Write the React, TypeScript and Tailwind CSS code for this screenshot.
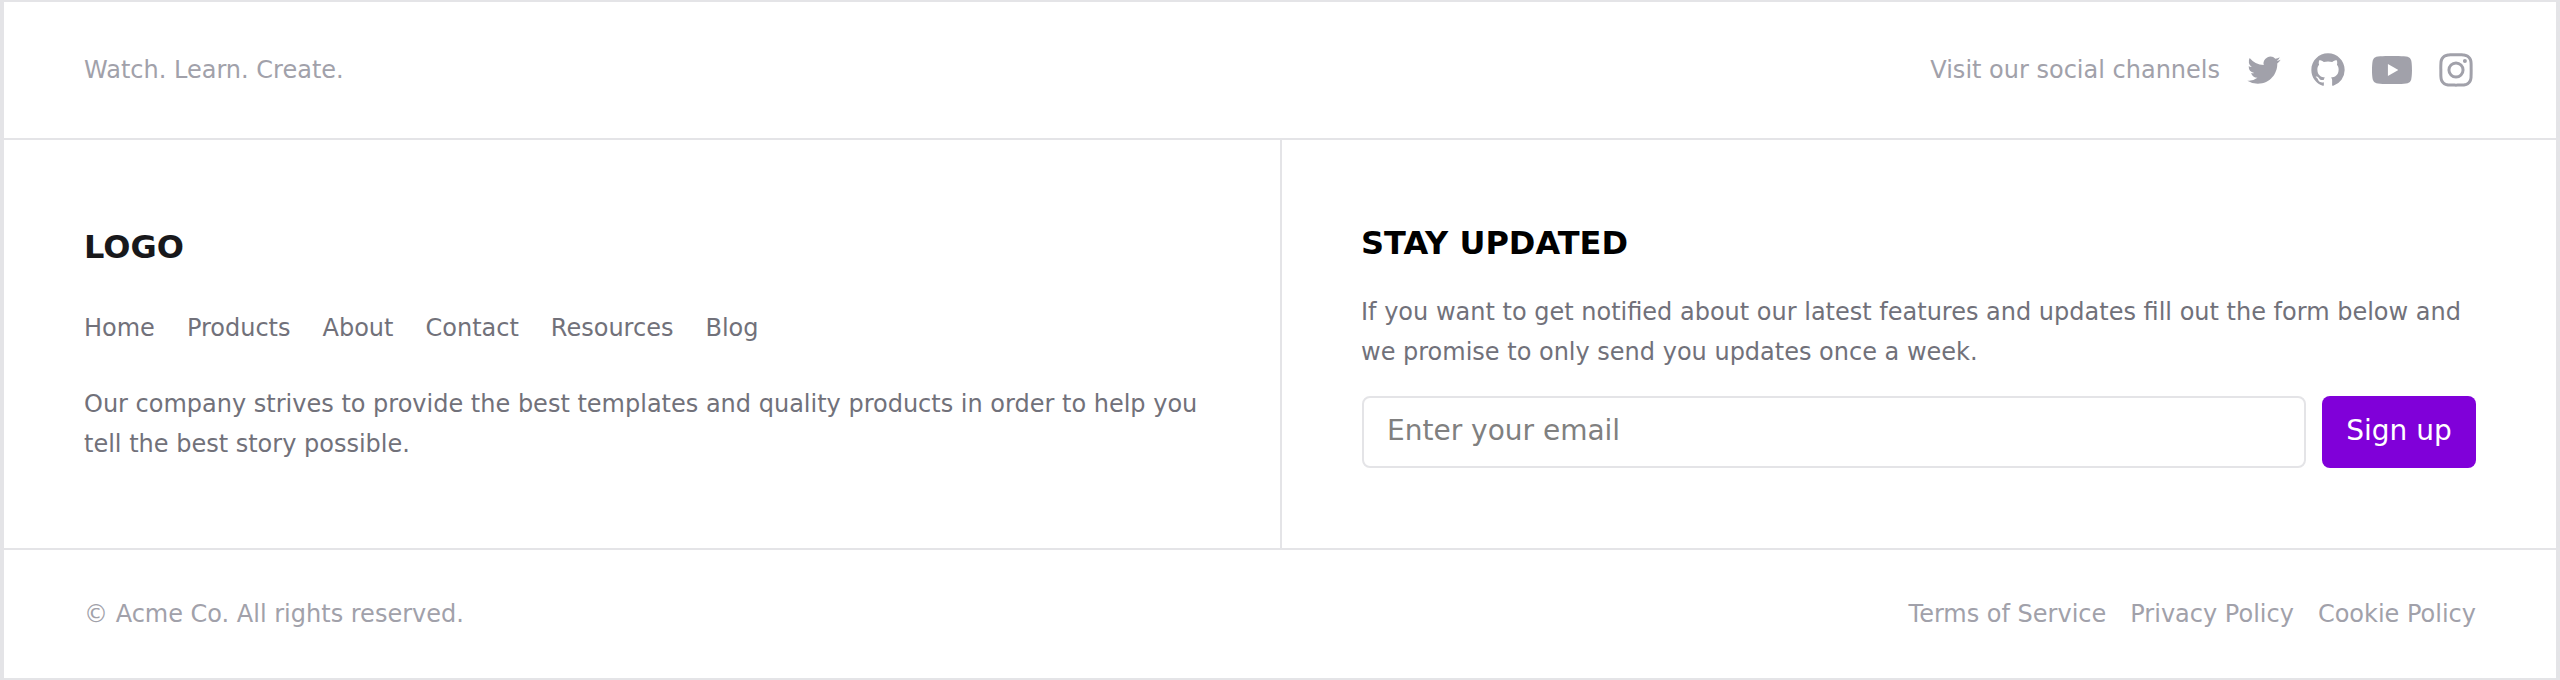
import type { ReactNode } from 'react'

const navLinks = ['Home', 'Products', 'About', 'Contact', 'Resources', 'Blog']
const legalLinks = ['Terms of Service', 'Privacy Policy', 'Cookie Policy']

interface SocialIconProps {
  label: string
  children: ReactNode
}

function SocialIcon({ label, children }: SocialIconProps) {
  return (
    <a href="#" aria-label={label}>
      <svg className="block size-10" viewBox="0 0 24 24" fill="currentColor" fillRule="evenodd" clipRule="evenodd">
        {children}
      </svg>
    </a>
  )
}

export default function App() {
  return (
    <footer className="flex h-[680px] flex-col border-x-4 border-y-2 border-[#e4e4e7] bg-white font-['DejaVu_Sans',sans-serif] text-2xl/10 text-[#71717a]">
      <div className="flex h-[138px] items-center justify-between border-b-2 border-[#e4e4e7] px-20 text-[#a1a1aa]">
        <p>Watch. Learn. Create.</p>
        <div className="flex items-center gap-6">
          <p>Visit our social channels</p>
          <SocialIcon label="Twitter">
            <path d="M8.29 20.251c7.547 0 11.675-6.253 11.675-11.675 0-.178 0-.355-.012-.53A8.348 8.348 0 0022 5.92a8.19 8.19 0 01-2.357.646 4.118 4.118 0 001.804-2.27 8.224 8.224 0 01-2.605.996 4.107 4.107 0 00-6.993 3.743 11.65 11.65 0 01-8.457-4.287 4.106 4.106 0 001.27 5.477A4.072 4.072 0 012.8 9.713v.052a4.105 4.105 0 003.292 4.022 4.095 4.095 0 01-1.853.07 4.108 4.108 0 003.834 2.85A8.233 8.233 0 012 18.407a11.616 11.616 0 006.29 1.84" />
          </SocialIcon>
          <SocialIcon label="GitHub">
            <path d="M12 2C6.477 2 2 6.484 2 12.017c0 4.425 2.865 8.18 6.839 9.504.5.092.682-.217.682-.483 0-.237-.008-.868-.013-1.703-2.782.605-3.369-1.343-3.369-1.343-.454-1.158-1.11-1.466-1.11-1.466-.908-.62.069-.608.069-.608 1.003.07 1.531 1.032 1.531 1.032.892 1.53 2.341 1.088 2.91.832.092-.647.35-1.088.636-1.338-2.22-.253-4.555-1.113-4.555-4.951 0-1.093.39-1.988 1.029-2.688-.103-.253-.446-1.272.098-2.65 0 0 .84-.27 2.75 1.026A9.564 9.564 0 0112 6.844c.85.004 1.705.115 2.504.337 1.909-1.296 2.747-1.027 2.747-1.027.546 1.379.202 2.398.1 2.651.64.7 1.028 1.595 1.028 2.688 0 3.848-2.339 4.695-4.566 4.943.359.309.678.92.678 1.855 0 1.338-.012 2.419-.012 2.747 0 .268.18.58.688.482A10.019 10.019 0 0022 12.017C22 6.484 17.522 2 12 2z" />
          </SocialIcon>
          <SocialIcon label="YouTube">
            <path d="M23.498 6.186a3.016 3.016 0 0 0-2.122-2.136C19.505 3.545 12 3.545 12 3.545s-7.505 0-9.377.505A3.017 3.017 0 0 0 .502 6.186C0 8.07 0 12 0 12s0 3.93.502 5.814a3.016 3.016 0 0 0 2.122 2.136c1.871.505 9.376.505 9.376.505s7.505 0 9.377-.505a3.015 3.015 0 0 0 2.122-2.136C24 15.93 24 12 24 12s0-3.93-.502-5.814zM9.545 15.568V8.432L15.818 12l-6.273 3.568z" />
          </SocialIcon>
          <SocialIcon label="Instagram">
            <path d="M12.315 2c2.43 0 2.784.013 3.808.06 1.064.049 1.791.218 2.427.465a4.902 4.902 0 011.772 1.153 4.902 4.902 0 011.153 1.772c.247.636.416 1.363.465 2.427.048 1.067.06 1.407.06 4.123v.08c0 2.643-.012 2.987-.06 4.043-.049 1.064-.218 1.791-.465 2.427a4.902 4.902 0 01-1.153 1.772 4.902 4.902 0 01-1.772 1.153c-.636.247-1.363.416-2.427.465-1.067.048-1.407.06-4.123.06h-.08c-2.643 0-2.987-.012-4.043-.06-1.064-.049-1.791-.218-2.427-.465a4.902 4.902 0 01-1.772-1.153 4.902 4.902 0 01-1.153-1.772c-.247-.636-.416-1.363-.465-2.427-.047-1.024-.06-1.379-.06-3.808v-.63c0-2.43.013-2.784.06-3.808.049-1.064.218-1.791.465-2.427a4.902 4.902 0 011.153-1.772A4.902 4.902 0 015.45 2.525c.636-.247 1.363-.416 2.427-.465C8.901 2.013 9.256 2 11.685 2h.63zm-.081 1.802h-.468c-2.456 0-2.784.011-3.807.058-.975.045-1.504.207-1.857.344-.467.182-.8.398-1.15.748-.35.35-.566.683-.748 1.15-.137.353-.3.882-.344 1.857-.047 1.023-.058 1.351-.058 3.807v.468c0 2.456.011 2.784.058 3.807.045.975.207 1.504.344 1.857.182.466.399.8.748 1.15.35.35.683.566 1.15.748.353.137.882.3 1.857.344 1.054.048 1.37.058 4.041.058h.08c2.597 0 2.917-.01 3.96-.058.976-.045 1.505-.207 1.858-.344.466-.182.8-.398 1.15-.748.35-.35.566-.683.748-1.15.137-.353.3-.882.344-1.857.048-1.055.058-1.37.058-4.041v-.08c0-2.597-.01-2.917-.058-3.96-.045-.976-.207-1.505-.344-1.858a3.097 3.097 0 00-.748-1.15 3.098 3.098 0 00-1.15-.748c-.353-.137-.882-.3-1.857-.344-1.023-.047-1.351-.058-3.807-.058zM12 6.865a5.135 5.135 0 110 10.27 5.135 5.135 0 010-10.27zm0 1.802a3.333 3.333 0 100 6.666 3.333 3.333 0 000-6.666zm5.338-3.205a1.2 1.2 0 110 2.4 1.2 1.2 0 010-2.4z" />
          </SocialIcon>
        </div>
      </div>

      <div className="flex h-[410px] border-b-2 border-[#e4e4e7]">
        <div className="flex w-[1278px] flex-col justify-center gap-9 border-r-2 border-[#e4e4e7] px-20">
          <h2 className="mb-0.5 text-[32px]/[46px] font-bold text-[#18181b]">LOGO</h2>
          <nav className="flex gap-8">
            {navLinks.map((link) => (
              <a key={link} href="#">{link}</a>
            ))}
          </nav>
          <p>
            Our company strives to provide the best templates and quality products in order to help you tell the best
            story possible.
          </p>
        </div>

        <div className="flex flex-1 flex-col justify-center gap-6 pr-20 pl-[79px]">
          <h2 className="mb-0.5 text-[32px]/[46px] font-bold text-black">STAY UPDATED</h2>
          <p>
            If you want to get notified about our latest features and updates fill out the form below and we promise to
            only send you updates once a week.
          </p>
          <form className="ml-px flex h-18 gap-4 text-[28px]">
            <input
              type="email"
              placeholder="Enter your email"
              className="min-w-0 flex-1 rounded-lg border-2 border-[#e4e4e7] px-[23px] pb-0.5 placeholder:text-[#808080]"
            />
            <button type="button" className="w-[154px] rounded-lg bg-[#8000d9] pb-0.5 text-white">
              Sign up
            </button>
          </form>
        </div>
      </div>

      <div className="flex flex-1 items-center justify-between px-20 text-[#a1a1aa]">
        <p>© Acme Co. All rights reserved.</p>
        <div className="flex gap-6">
          {legalLinks.map((link) => (
            <a key={link} href="#">{link}</a>
          ))}
        </div>
      </div>
    </footer>
  )
}
